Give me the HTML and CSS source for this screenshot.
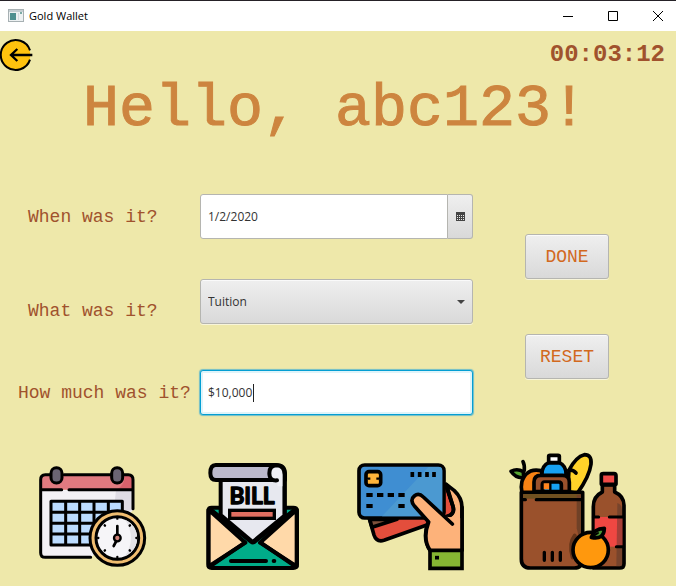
FILE: index.html
```html
<!DOCTYPE html>
<html lang="en">
<head>
<meta charset="utf-8">
<meta name="viewport" content="width=device-width, initial-scale=1">
<title>Gold Wallet</title>
<link rel="stylesheet" href="styles.css">
</head>
<body>
<header class="titlebar">
  <svg class="app-icon" viewBox="0 0 16 14" aria-hidden="true">
    <rect x=".5" y=".5" width="15" height="12" fill="#edf1f2" stroke="#a7b0b3"/>
    <rect x="1" y="1" width="14" height="2" fill="#c3cdd1"/>
    <rect x="2" y="4" width="6" height="7" fill="#4f9090"/>
    <rect x="10" y="4" width="1" height="7" fill="#d4dcdf"/>
    <rect x="12" y="3" width="2" height="2" fill="#7baaa5"/>
  </svg>
  <span class="app-name">Gold Wallet</span>
  <div class="window-controls">
    <button type="button" aria-label="Minimize"><svg viewBox="0 0 12 12"><path d="M1 6.500H11"/></svg></button>
    <button type="button" aria-label="Maximize"><svg viewBox="0 0 12 12"><path d="M1.500 1.500H10.500V10.500H1.500Z"/></svg></button>
    <button type="button" aria-label="Close"><svg viewBox="0 0 12 12"><path d="M1 1L11 11M11 1L1 11"/></svg></button>
  </div>
</header>
<main class="app">
  <div class="topline">
    <button class="back" type="button" aria-label="Back">
      <svg viewBox="0 0 102 102">
        <circle cx="47" cy="51" r="44" fill="#ffc20e"/>
        <path d="M90 37A45 45 0 1 0 90 65" fill="none" stroke="#000" stroke-width="6"/>
        <path d="M97 51H34M52 33L33 51L52 69" fill="none" stroke="#000" stroke-width="7"/>
      </svg>
    </button>
    <time class="clock">00:03:12</time>
  </div>
  <h1>Hello, abc123!</h1>
  <form class="entry">
    <div class="fields">
      <label for="date">When was it?</label>
      <div class="date-picker">
        <input class="field" id="date" type="text" value="1/2/2020">
        <button type="button" class="calendar-button" aria-label="Open calendar">
          <svg viewBox="0 0 9 9"><path d="M0 0H9V9H0Z" fill="#444"/><path d="M1 3.500H8M1 5.500H8M1 7.500H8" stroke="#e8e8e8" stroke-dasharray="1 1"/></svg>
        </button>
      </div>
      <label for="kind" class="label-low">What was it?</label>
      <div class="select-wrap">
        <select class="field" id="kind"><option>Tuition</option></select>
        <svg class="arrow" viewBox="0 0 8 4" aria-hidden="true"><path d="M0 0H8L4 4Z" fill="#444"/></svg>
      </div>
      <label for="amount" class="label-long">How much was it?</label>
      <div class="amount-wrap">
        <input class="field amount" id="amount" type="text" value="$10,000">
        <span class="caret"></span>
      </div>
    </div>
    <div class="actions">
      <button type="submit">DONE</button>
      <button type="reset">RESET</button>
    </div>
  </form>
  <div class="pictures">
    <svg width="125" height="125" viewBox="0 0 375 375" role="img" aria-label="Calendar and clock" stroke="#000" stroke-width="9" stroke-linecap="round" stroke-linejoin="round">
      <path d="M32 104H309V165L185 307H44Q32 307 32 295Z" fill="#f3f1f5" stroke="none"/>
      <path d="M258 106H309V165L250 180Z" fill="#dfdce4" stroke="none"/>
      <path d="M32 104V72Q32 59 45 59H296Q309 59 309 72V104Z" fill="#e07a80" stroke="none"/>
      <path d="M284 60H296Q309 60 309 72V104H260Q285 90 284 60Z" fill="#d8616c" stroke="none"/>
      <path d="M182 307H46Q32 307 32 293V74Q32 59 46 59H60M102 59H242M282 59H295Q309 59 309 74V161M34 104H95M117 104H307" fill="none"/>
      <rect x="63" y="38" width="33" height="46" rx="16" fill="#6a6574"/><rect x="245" y="38" width="33" height="46" rx="16" fill="#6a6574"/>
      <path d="M63 139H277V270H63Z" fill="#bcdcff"/><path d="M66 172H275M66 205H245M66 237H215M107 142V268M149 142V268M192 142V260M235 142V200" fill="none"/>
      <circle cx="262" cy="249" r="82" fill="#f0bd70"/>
      <circle cx="262" cy="249" r="64" fill="#f6f5f8"/>
      <path d="M286 194A60 60 0 0 1 285 304Q320 250 286 194Z" fill="#e2e1e6" stroke="none"/>
      <path d="M262 190V191M262 306V307M204 249H205M319 249H320M224 211L225 212M300 211L299 212M224 287L225 286M300 287L299 286" fill="none" stroke-width="7"/>
      <path d="M262 241V213M259 258L251 273" fill="none" stroke-width="8"/><circle cx="262" cy="249" r="10" fill="#cf8279" stroke-width="7"/>
    </svg>
    <svg width="115" height="125" viewBox="0 0 345 375" role="img" aria-label="Bill in an envelope" stroke="#000" stroke-width="12" stroke-linecap="round" stroke-linejoin="round">
      <path d="M43 168Q43 158 53 158H298Q309 158 309 168V328Q309 339 298 339H53Q43 339 43 328Z" fill="#00ac89"/>
      <path d="M44 164L154 263L44 334ZM308 164L198 263L308 334Z" fill="#ffd9a9"/>
      <path d="M80 55H272V182L176 261L80 180Z" fill="#e7e8ef"/>
      <path d="M65 30H246Q273 30 273 57V75H66Q49 75 49 54Q49 30 65 30Z" fill="#bbb9cc"/>
      <path d="M249 76Q226 78 226 55Q226 31 248 31Q272 32 272 59V94H251Z" fill="#f0f0f6" stroke="none"/>
      <path d="M249 76Q226 78 226 55Q226 31 248 31Q272 32 272 59V178" fill="none"/>
      <path d="M50 164L172 261Q176 264 181 261L302 164M48 334L153 263M304 334L200 263" fill="none"/>
      <rect x="107" y="166" width="134" height="24" fill="#df6e61" stroke-width="10" stroke-linejoin="miter"/>
      <path d="M111 318H216M239 318H241" stroke-width="12"/>
      <text class="bill-text" x="174" y="148" text-anchor="middle" fill="#000" stroke="#000" stroke-width="4">BILL</text>
    </svg>
    <svg width="130" height="125" viewBox="0 0 390 375" role="img" aria-label="Hand with payment cards" stroke="#000" stroke-width="11" stroke-linecap="round" stroke-linejoin="round">
      <path d="M70 191L84 240Q91 262 114 256L308 187Q329 180 321 154L300 88Z" fill="#e34e3c"/>
      <path d="M71 193L78 217L153 193Z" fill="#80523c"/>
      <path d="M245 205Q229 252 252 286H348V157Q348 129 325 107L301 88L321 154Q329 180 298 187Z" fill="#fdb27a"/>
      <rect x="39" y="30" width="255" height="159" rx="17" fill="#3f8ed2"/>
      <path d="M108 184L247 36H280Q289 36 289 48V184Z" fill="#4b99d1" stroke="none"/>
      <path d="M301 95L321 154Q328 177 303 184" fill="none"/>
      <path d="M319 207L232 126Q218 112 205 123Q190 135 206 154L246 199L245 210Q238 250 252 286H346V190L300 185Z" fill="#fdb27a" stroke="none"/>
      <path d="M319 207L232 126Q218 112 205 123Q190 135 206 154L248 201Q229 251 252 286M348 157V286" fill="none"/>
      <path d="M252 286H348V340H252Z" fill="#86b633" stroke-linejoin="miter"/>
      <rect x="60" y="50" width="44" height="42" rx="9" fill="#ffb43b"/>
      <path d="M69 62H77M87 62H95M69 80H77M87 80H95M66 71H73M91 71H98" stroke="#ffb43b" stroke-width="6"/>
      <path d="M62 71H73M91 71H102" stroke-width="7" stroke-linecap="butt"/>
      <path d="M61 120H80M93 120H112M125 120H144M157 120H176M61 153H80M157 153H176" stroke-width="12" stroke-linecap="butt"/>
      <path d="M199 51V66M221 51V66M243 51V66M264 51V66" stroke-width="11" stroke-linecap="butt"/>
      <path d="M267 308H279" stroke-linecap="butt"/>
    </svg>
    <svg width="140" height="135" viewBox="0 0 420 405" role="img" aria-label="Groceries" stroke="#000" stroke-width="11" stroke-linecap="round" stroke-linejoin="round">
      <path d="M203 140L207 75Q228 35 253 29Q276 29 273 58Q268 95 232 145Z" fill="#ffd229"/><path d="M207 76Q219 73 228 84" fill="none"/>
      <path d="M66 144Q58 106 79 87Q95 71 123 77L146 144Z" fill="#f88214"/>
      <path d="M69 50Q74 59 73 76" fill="none"/><path d="M33 79Q51 69 70 80L71 98Q48 101 33 79Z" fill="#58a632"/>
      <path d="M126 87Q126 62 146 53H178Q198 62 198 87L197 140H128Z" fill="#17a1f2"/>
      <path d="M146 53V34Q146 31 150 31H174Q178 31 178 34V53Z" fill="#fff"/>
      <path d="M102 140V111Q102 91 122 91H188Q208 91 208 111V140H184V119Q184 111 176 111H134Q127 111 127 119V140Z" fill="#9a512c"/>
      <path d="M131 133V115H152L149 133Z" fill="#ff851e" stroke="none"/><path d="M151 133V114" fill="none" stroke-width="7"/>
      <path d="M64 142H248V342Q248 369 223 369H91Q64 369 64 342Z" fill="#9a512c"/>
      <path d="M70 147H240V161H70Z" fill="#705020" stroke="none"/><path d="M230 149H243V300L230 250Z" fill="#704127" stroke="none"/>
      <path d="M68 164H76M109 164H242M133 322V346M157 322V346M181 322V346" fill="none" stroke-width="10"/>
      <path d="M307 120H344V141Q372 153 372 181V356Q372 369 359 369H280V185Q280 154 307 141Z" fill="#9a512c"/>
      <path d="M284 216H367V305H284Z" fill="#ef4742" stroke="none"/><path d="M352 174Q366 178 366 195V364H349Z" fill="#4d352d" fill-opacity=".45" stroke="none"/>
      <path d="M280 216H296M328 216H371M349 305H371" fill="none" stroke-width="9"/>
      <path d="M304 90Q304 86 310 86H342Q348 86 348 92V118H304Z" fill="#f14a47"/>
      <path d="M224 272Q206 294 218 337" fill="none" stroke="#653519" stroke-width="12"/>
      <circle cx="272" cy="315" r="53" fill="#ff980d"/><path d="M274 277Q282 251 313 250Q312 285 274 277Z" fill="#4d9935"/><path d="M274 277L294 264" stroke-width="6"/>
    </svg>
  </div>
</main>
</body>
</html>
```
FILE: styles.css
```css
* { box-sizing: border-box; }

body {
  margin: 0;
  min-height: 100vh;
  display: flex;
  flex-direction: column;
  background: #eee8aa;
  color: #333;
  font: 12px/16px "Open Sans", "Noto Sans", sans-serif;
}

button, input, select { font: inherit; color: inherit; margin: 0; }
svg { display: block; }

.titlebar {
  display: flex;
  align-items: center;
  height: 31px;
  padding-left: 8px;
  background: #fff;
  border-top: 1px solid #252127;
  color: #000;
}
.app-icon { width: 16px; height: 14px; margin-right: 5px; }
.app-name { font-size: 11px; }
.window-controls { display: flex; gap: 9px; margin-left: auto; }
.window-controls button {
  width: 36px;
  height: 30px;
  padding: 0;
  display: grid;
  place-items: center;
  border: 0;
  background: none;
}
.window-controls svg { width: 12px; height: 12px; fill: none; stroke: #000; stroke-width: 1; }

.app { flex: 1; display: flex; flex-direction: column; }

.topline {
  display: flex;
  align-items: center;
  justify-content: space-between;
  height: 48px;
  padding-right: 11px;
}
.back { padding: 0; border: 0; background: none; }
.back svg { width: 34px; height: 34px; }
.clock { font: bold 24px/32px "Liberation Mono", monospace; color: #a0522d; }

h1 {
  margin: 0;
  padding-right: 6px;
  text-align: center;
  font: 60px/60px "Liberation Mono", monospace;
  color: #cd853f;
  -webkit-text-stroke: 1px #cd853f;
}

.entry {
  display: grid;
  grid-template-columns: 473fr 203fr;
  margin-top: 55px;
}
.fields {
  display: grid;
  grid-template-columns: 200fr 273fr;
  grid-template-rows: 45px 51px 45px;
  row-gap: 40px;
}
.fields label {
  align-self: center;
  padding-left: 28px;
  font: 18px/38px "Liberation Mono", monospace;
  color: #a0522d;
  white-space: nowrap;
}
.fields .label-low { align-self: end; }
.fields .label-long { padding-left: 18px; }

.field {
  width: 100%;
  height: 45px;
  padding: 0 7px;
  border: 1px solid #b5b5b0;
  border-radius: 3px;
  background: #fff;
  outline: 0;
}
.date-picker { display: flex; }
.date-picker .field { flex: 1; min-width: 0; border-radius: 3px 0 0 3px; }
.calendar-button {
  width: 25px;
  height: 45px;
  padding: 0;
  display: grid;
  place-items: center;
  border: 1px solid #b5b5b0;
  border-left: 0;
  border-radius: 0 3px 3px 0;
  background: linear-gradient(#efefef, #d9d9d9);
}
.calendar-button svg { width: 9px; height: 9px; }

.select-wrap, .amount-wrap { position: relative; height: 45px; }
select.field {
  appearance: none;
  background: linear-gradient(#efefef, #d9d9d9);
  box-shadow: inset 0 1px #fafafa, 0 1px #f8f5da;
}
.arrow { position: absolute; right: 8px; top: 21px; width: 8px; height: 4px; pointer-events: none; }
.amount {
  border-color: #039ed3;
  box-shadow: inset 0 0 0 2px #dff4fa, 0 0 1px 1px #6dbdc8;
}
.caret { position: absolute; left: 53px; top: 14px; width: 1px; height: 18px; background: #222; }

.actions {
  display: flex;
  flex-direction: column;
  align-items: flex-start;
  gap: 55px;
  padding: 40px 0 0 52px;
}
.actions button {
  width: 84px;
  height: 45px;
  padding: 0;
  border: 1px solid #b5b5b0;
  border-radius: 3px;
  background: linear-gradient(#efefef, #d9d9d9);
  box-shadow: inset 0 1px #fafafa, 0 1px #f8f5da;
  font: 18px/24px "Liberation Mono", monospace;
  color: #d2691e;
}

.pictures {
  display: grid;
  grid-template-columns: repeat(4, 1fr);
  justify-items: center;
  align-items: end;
  margin-top: auto;
  padding: 0 27px 6px 13px;
}
.bill-text { font: bold 68px Lato, "Liberation Sans", sans-serif; }
```
